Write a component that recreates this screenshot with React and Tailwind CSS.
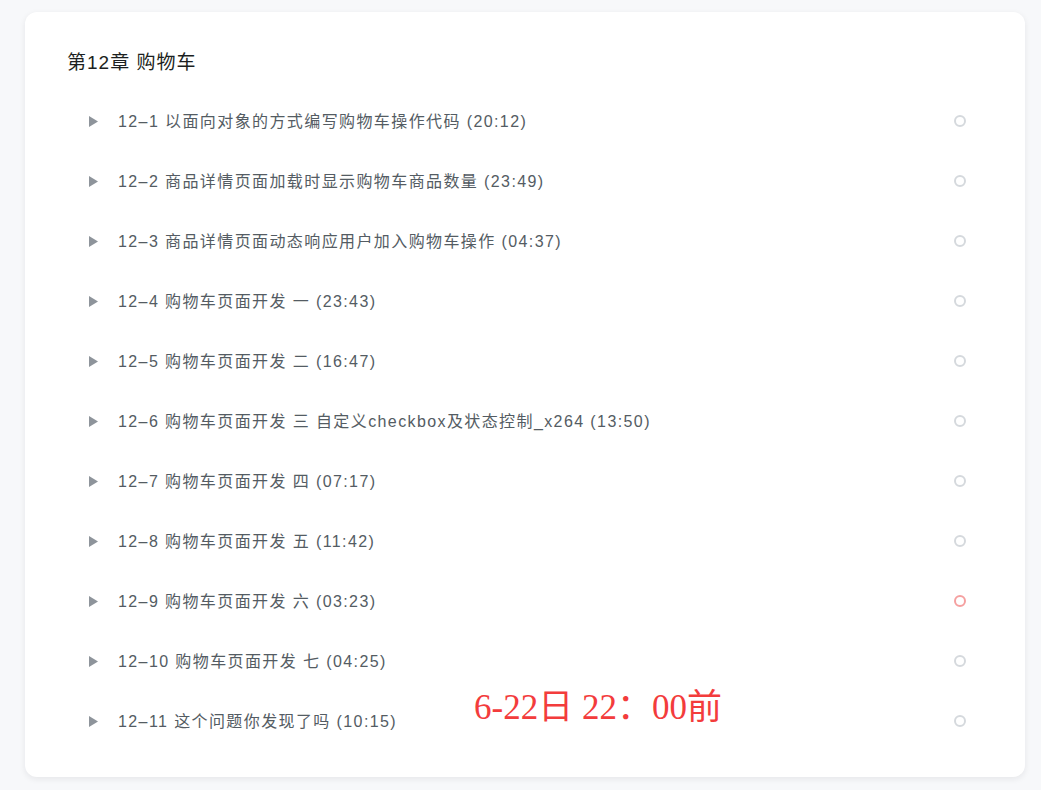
const lessons = [
  { title: "12–1 以面向对象的方式编写购物车操作代码 (20:12)" },
  { title: "12–2 商品详情页面加载时显示购物车商品数量 (23:49)" },
  { title: "12–3 商品详情页面动态响应用户加入购物车操作 (04:37)" },
  { title: "12–4 购物车页面开发 一 (23:43)" },
  { title: "12–5 购物车页面开发 二 (16:47)" },
  { title: "12–6 购物车页面开发 三 自定义checkbox及状态控制_x264 (13:50)" },
  { title: "12–7 购物车页面开发 四 (07:17)" },
  { title: "12–8 购物车页面开发 五 (11:42)" },
  { title: "12–9 购物车页面开发 六 (03:23)", active: true },
  { title: "12–10 购物车页面开发 七 (04:25)" },
  { title: "12–11 这个问题你发现了吗 (10:15)" },
];

function Row({ lesson }) {
  return (
    <li className="flex items-center h-[60px] pl-[22px] pr-[17px]">
      <svg width="9" height="11" viewBox="0 0 9 11" className="shrink-0">
        <path d="M0 0 L9 5.5 L0 11 Z" fill="#8e949b" />
      </svg>
      <span className="ml-[20px] pt-[2px] text-[16px] text-[#545c63] tracking-[1.4px]">{lesson.title}</span>
      <span
        className={
          "ml-auto w-[12px] h-[12px] rounded-full border-2 " +
          (lesson.active ? "border-[#f5a0a0]" : "border-[#d5d9dd]")
        }
      ></span>
    </li>
  );
}

export default function App() {
  return (
    <div
      className="min-h-screen bg-[#f7f8fa] pt-[12px] pl-[25px]"
      style={{ fontFamily: '"Liberation Sans", "Noto Sans CJK SC", sans-serif' }}
    >
      <div className="relative w-[1000px] h-[765px] bg-white rounded-[12px] shadow-[0_2px_6px_rgba(28,31,33,0.08)] pt-[39px] px-[42px] pb-[26px]">
        <h2 className="text-[19px] leading-[24px] tracking-[1px] text-[#1c1f21] mb-[16px]">第12章 购物车</h2>
        <ul>
          {lessons.map((l) => (
            <Row key={l.title} lesson={l} />
          ))}
        </ul>
        <div
          className="absolute left-[449px] top-[676px] text-[35px] leading-[40px] text-[#f33c3c]"
          style={{ fontFamily: '"Liberation Serif", "Noto Sans CJK SC", serif' }}
        >
          6-22日 22：00前
        </div>
      </div>
    </div>
  );
}
